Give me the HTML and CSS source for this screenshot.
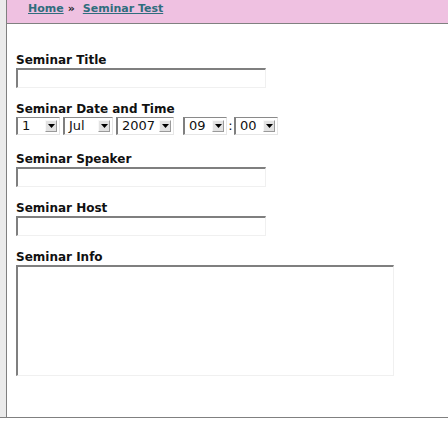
FILE: index.html
```html
<!DOCTYPE html>
<html>
<head>
<meta charset="utf-8">
<title>Seminar Test</title>
<link rel="stylesheet" href="styles.css">
</head>
<body>
<div class="frame">
  <div class="page">
    <div class="crumbs">
      <a href="#" class="crumb">Home</a><span class="sep">»</span><a href="#" class="crumb">Seminar Test</a>
    </div>
    <form class="form">
      <div class="field">
        <div class="label">Seminar Title</div>
        <div class="input"></div>
      </div>
      <div class="field field-date">
        <div class="label">Seminar Date and Time</div>
        <div class="selects">
          <span class="sel sel-day"><span class="sel-val">1</span><span class="sel-btn"><svg width="7" height="4" viewBox="0 0 7 4"><polygon points="0,0 7,0 3.5,4" fill="#000"/></svg></span></span>
          <span class="sel sel-month"><span class="sel-val">Jul</span><span class="sel-btn"><svg width="7" height="4" viewBox="0 0 7 4"><polygon points="0,0 7,0 3.5,4" fill="#000"/></svg></span></span>
          <span class="sel sel-year"><span class="sel-val">2007</span><span class="sel-btn"><svg width="7" height="4" viewBox="0 0 7 4"><polygon points="0,0 7,0 3.5,4" fill="#000"/></svg></span></span>
          <span class="sel sel-hour"><span class="sel-val">09</span><span class="sel-btn"><svg width="7" height="4" viewBox="0 0 7 4"><polygon points="0,0 7,0 3.5,4" fill="#000"/></svg></span></span>
          <span class="colon">:</span>
          <span class="sel sel-min"><span class="sel-val">00</span><span class="sel-btn"><svg width="7" height="4" viewBox="0 0 7 4"><polygon points="0,0 7,0 3.5,4" fill="#000"/></svg></span></span>
        </div>
      </div>
      <div class="field">
        <div class="label">Seminar Speaker</div>
        <div class="input"></div>
      </div>
      <div class="field">
        <div class="label">Seminar Host</div>
        <div class="input"></div>
      </div>
      <div class="field">
        <div class="label">Seminar Info</div>
        <div class="textarea"></div>
      </div>
    </form>
  </div>
</div>
</body>
</html>
```
FILE: styles.css
```css
html, body {
  margin: 0;
  padding: 0;
  background: #ffffff;
}
body {
  font-family: "DejaVu Sans", Verdana, sans-serif;
  color: #111;
}
.frame {
  background: #ebebeb;
  padding-left: 6px;
  border-bottom: 1px solid #808080;
  width: 442px;
}
.page {
  background: #fff;
  border-left: 1px solid #808080;
  height: 417px;
  box-sizing: border-box;
}
.crumbs {
  background: #efc1e1;
  border-bottom: 1px solid #808080;
  height: 24px;
  box-sizing: border-box;
  padding: 2px 0 0 21px;
  font-size: 11px;
  line-height: 13px;
  font-weight: bold;
  display: flex;
  align-items: flex-start;
}
.crumb {
  color: #2f6d7d;
  text-decoration: underline;
}
.sep {
  color: #222;
  margin: 0 8px 0 4px;
}
.form {
  padding: 29px 0 0 9px;
}
.field {
  margin-bottom: 14px;
}
.field-date {
  margin-bottom: 17px;
}
.label {
  font-size: 12px;
  line-height: 14px;
  font-weight: bold;
  color: #111;
  margin-bottom: 1px;
}
.input {
  width: 250px;
  height: 20px;
  box-sizing: border-box;
  border-top: 2px solid #7f7f7f;
  border-left: 2px solid #7f7f7f;
  border-right: 1px solid #f0f0f0;
  border-bottom: 1px solid #f0f0f0;
}
.textarea {
  width: 378px;
  height: 111px;
  box-sizing: border-box;
  border-top: 2px solid #7f7f7f;
  border-left: 2px solid #7f7f7f;
  border-right: 1px solid #f0f0f0;
  border-bottom: 1px solid #f0f0f0;
}
.selects {
  display: flex;
  align-items: center;
  height: 18px;
}
.sel {
  display: flex;
  align-items: center;
  justify-content: space-between;
  height: 18px;
  box-sizing: border-box;
  border-top: 1px solid #8a8a8a;
  border-left: 2px solid #7f7f7f;
  border-right: 1px solid #e6e6e6;
  border-bottom: 1px solid #e6e6e6;
  padding: 0 2px 0 4px;
  background: #fff;
  font-size: 13px;
  line-height: 16px;
  color: #111;
}
.sel-btn {
  width: 12px;
  height: 12px;
  box-sizing: border-box;
  background: #e2e2e2;
  border-top: 1px solid #f8f8f8;
  border-left: 1px solid #f8f8f8;
  border-right: 1px solid #9a9a9a;
  border-bottom: 1px solid #9a9a9a;
  display: flex;
  align-items: center;
  justify-content: center;
}
.sel-btn svg {
  display: block;
}
.sel-day { width: 44px; margin-right: 3px; }
.sel-month { width: 50px; margin-right: 3px; }
.sel-year { width: 58px; margin-right: 9px; }
.sel-hour { width: 44px; }
.sel-min { width: 44px; }
.colon {
  width: 7px;
  text-align: center;
  font-size: 13px;
  line-height: 16px;
}
```
